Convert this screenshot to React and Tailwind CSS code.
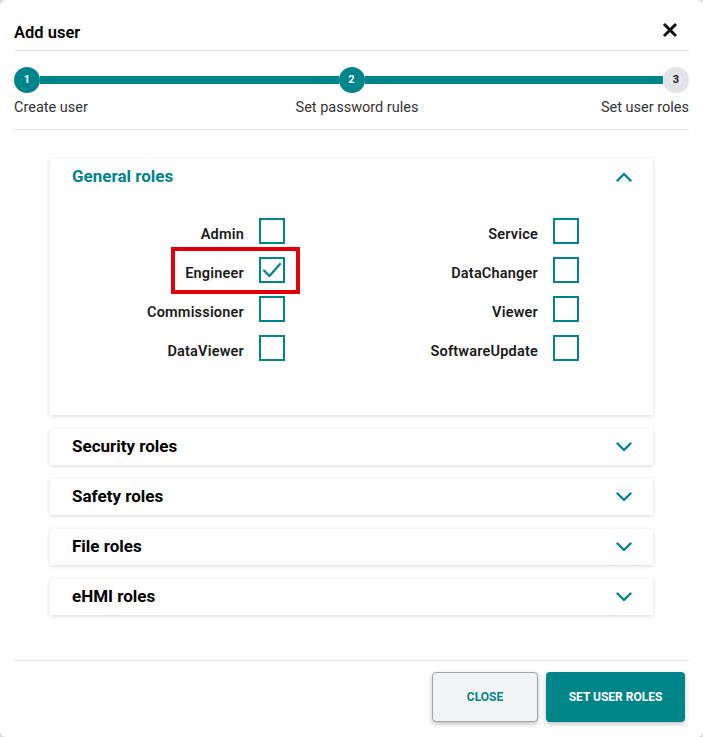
import React from "react";

const TEAL = "#00858a";

function Chevron({ up }) {
  return (
    <svg width="16" height="10" viewBox="0 0 16 10" fill="none">
      <polyline
        points={up ? "1.5,8.5 8,2 14.5,8.5" : "1.5,1.5 8,8 14.5,1.5"}
        stroke={TEAL}
        strokeWidth="2.4"
        strokeLinecap="round"
        strokeLinejoin="round"
      />
    </svg>
  );
}

function Box({ checked }) {
  return (
    <div className="w-[26px] h-[26px] border-2 border-[#00858a] bg-white flex items-center justify-center shrink-0">
      {checked && (
        <svg width="20" height="18" viewBox="0 0 20 18" fill="none">
          <polyline points="2,9.5 7.5,15 18,3" stroke={TEAL} strokeWidth="2.2" strokeLinecap="round" strokeLinejoin="round" />
        </svg>
      )}
    </div>
  );
}

function Role({ label, checked }) {
  return (
    <div className="flex items-center justify-end gap-[15px] h-[26px]">
      <span className="text-[14.5px] font-semibold text-[#1a1a1a] tracking-[0.2px] mt-[7px]">{label}</span>
      <Box checked={checked} />
    </div>
  );
}

function Collapsed({ title }) {
  return (
    <div className="h-[36px] bg-white shadow-[0_1px_4px_rgba(0,0,0,0.16)] flex items-center justify-between pl-[22px] pr-[21px]">
      <span className="text-[17px] font-bold text-black">{title}</span>
      <Chevron />
    </div>
  );
}

function Step({ n, active }) {
  return (
    <div
      className={
        "w-[26px] h-[26px] rounded-full flex items-center justify-center text-[11px] font-bold shrink-0 " +
        (active ? "bg-[#00858a] text-white" : "bg-[#e2e4e9] text-[#222]")
      }
    >
      {n}
    </div>
  );
}

export default function App() {
  const left = [
    ["Admin", false],
    ["Engineer", true],
    ["Commissioner", false],
    ["DataViewer", false],
  ];
  const right = ["Service", "DataChanger", "Viewer", "SoftwareUpdate"];
  return (
    <div className="w-[703px] h-[737px] bg-[#d9d9d9]" style={{ fontFamily: "Roboto, 'Noto Sans', sans-serif" }}>
      <div className="w-full h-full bg-white rounded-[6px] flex flex-col">
        {/* Header */}
        <div className="mx-[14px] border-b border-[#e1e2e8] pt-[21px] pb-[5px] flex items-center justify-between">
          <span className="text-[16.5px] font-semibold text-black leading-[24px]">Add user</span>
          <svg width="16" height="16" viewBox="0 0 16 16" className="mr-[11px] mt-[-6px]">
            <path d="M2 2 L14 14 M14 2 L2 14" stroke="#111" strokeWidth="3" strokeLinecap="butt" />
          </svg>
        </div>

        {/* Stepper */}
        <div className="mx-[14px] border-b border-[#e1e2e8] pt-[16px] pb-[12px]">
          <div className="flex items-center">
            <Step n="1" active />
            <div className="flex-1 h-[8px] bg-[#00858a]" />
            <Step n="2" active />
            <div className="flex-1 h-[8px] bg-[#00858a]" />
            <Step n="3" />
          </div>
          <div className="grid grid-cols-3 mt-[6px] text-[14.5px] text-[#333] leading-[18px]">
            <span>Create user</span>
            <span className="text-center pl-[11px] whitespace-nowrap">Set password rules</span>
            <span className="text-right">Set user roles</span>
          </div>
        </div>

        {/* Content */}
        <div className="flex-1 pt-[29px] pl-[50px]">
          <div className="w-[603px] flex flex-col gap-[14px]">
            <div className="relative h-[256px] bg-white shadow-[0_1px_4px_rgba(0,0,0,0.16)]">
              <div className="h-[36px] flex items-center justify-between pl-[22px] pr-[21px]">
                <span className="text-[17px] font-bold text-[#00858a]">General roles</span>
                <Chevron up />
              </div>
              <div className="grid grid-cols-[235px_294px] pt-[23px]">
                <div className="flex flex-col gap-[13px]">
                  {left.map(([l, c]) => (
                    <Role key={l} label={l} checked={c} />
                  ))}
                </div>
                <div className="flex flex-col gap-[13px]">
                  {right.map((l) => (
                    <Role key={l} label={l} />
                  ))}
                </div>
              </div>
              <div className="absolute left-[121px] top-[88px] w-[129px] h-[47px] border-4 border-[#e3000b]" />
            </div>
            <Collapsed title="Security roles" />
            <Collapsed title="Safety roles" />
            <Collapsed title="File roles" />
            <Collapsed title="eHMI roles" />
          </div>
        </div>

        {/* Footer */}
        <div className="mx-[14px] border-t border-[#e1e2e8] pt-[11px] pb-[15px] pr-[4px] flex justify-end gap-[8px]">
          <button className="w-[106px] h-[50px] rounded-[4px] border border-[#a3a3a3] bg-[#f2f3f5] text-[#00858a] text-[12px] font-bold shadow-[0_2px_5px_rgba(0,0,0,0.25)]">
            CLOSE
          </button>
          <button className="w-[139px] h-[50px] rounded-[4px] bg-[#00858a] text-white text-[12px] font-bold shadow-[0_2px_5px_rgba(0,0,0,0.25)]">
            SET USER ROLES
          </button>
        </div>
      </div>
    </div>
  );
}
